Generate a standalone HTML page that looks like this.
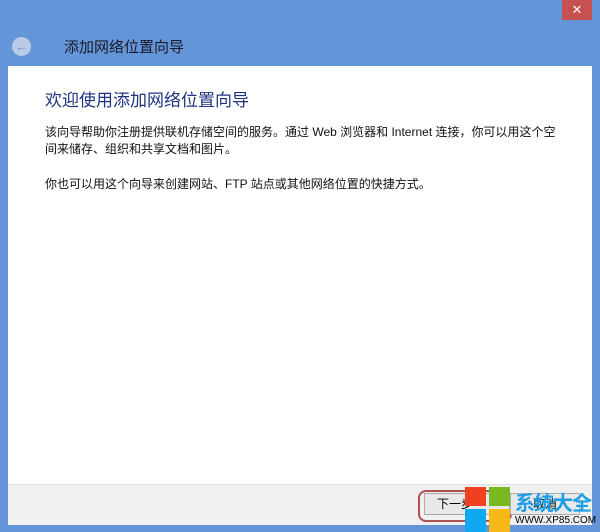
<html><head><style>
body{margin:0;width:600px;height:532px;background:#6495d8;position:relative;overflow:hidden;font-family:"Liberation Sans","Noto Sans CJK SC",sans-serif}
.a{position:absolute}
</style></head><body>
<div class="a" style="left:562px;top:0;width:30px;height:20px;background:#c75050;color:#fff;font-size:13px;text-align:center;line-height:19px">✕</div>
<div class="a" style="left:12px;top:37px;width:19px;height:19px;border-radius:50%;background:#b9cbe6;color:#7a90b8;font-size:13px;text-align:center;line-height:19px">←</div>
<div class="a" style="left:64px;top:36px;font-size:15px;color:#1a1a2a">添加网络位置向导</div>
<div class="a" style="left:8px;top:66px;width:584px;height:418px;background:#fff"></div>
<div class="a" style="left:8px;top:484px;width:584px;height:40px;background:#f0f0f0;border-top:1px solid #dcdcdc"></div>
<div class="a" style="left:45px;top:86px;font-size:17px;color:#1e3480">欢迎使用添加网络位置向导</div>
<div class="a" style="left:45px;top:124px;font-size:12px;line-height:17px;color:#111;width:530px">该向导帮助你注册提供联机存储空间的服务。通过 Web 浏览器和 Internet 连接，你可以用这个空<br>间来储存、组织和共享文档和图片。</div>
<div class="a" style="left:45px;top:175px;font-size:12px;color:#111">你也可以用这个向导来创建网站、FTP 站点或其他网络位置的快捷方式。</div>
<div class="a" style="left:418px;top:490px;width:90px;height:28px;border:2px solid #b05050;border-radius:8px"></div>
<div class="a" style="left:424px;top:493px;width:72px;height:20px;border:1px solid #aaa;background:#e8e8e8;font-size:12px;line-height:20px;padding-left:12px">下一步</div>
<div class="a" style="left:510px;top:493px;width:68px;height:20px;border:1px solid #aaa;background:#e8e8e8;font-size:12px;line-height:20px;text-align:center">取消</div>
<div class="a" style="left:465px;top:487px;width:21px;height:19px;background:#f04020"></div>
<div class="a" style="left:489px;top:487px;width:21px;height:19px;background:#78b820"></div>
<div class="a" style="left:465px;top:509px;width:21px;height:23px;background:#10a8f0"></div>
<div class="a" style="left:489px;top:509px;width:21px;height:23px;background:#f8b818"></div>
<div class="a" style="left:515px;top:487px;font-size:20px;font-weight:bold;color:#1a9ee8;letter-spacing:-1px">系统大全</div>
<div class="a" style="left:515px;top:515px;font-size:10px;color:#000">WWW.XP85.COM</div>
</body></html>
